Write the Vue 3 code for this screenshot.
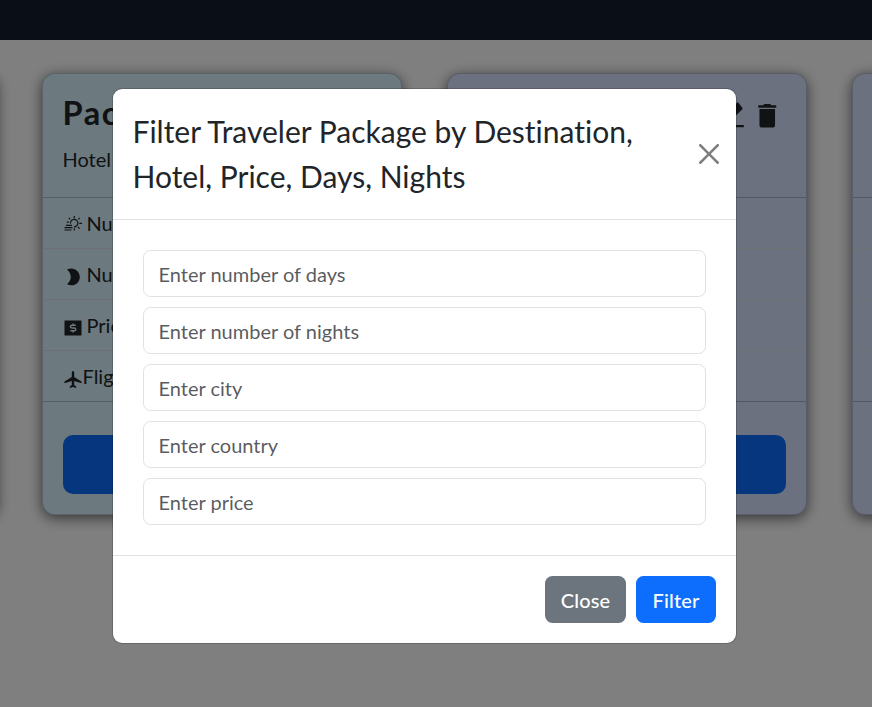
<script setup>
const cards = [
  { id: 1, tone: 'sky', title: 'Package' },
  { id: 2, tone: 'sky', title: 'Package' },
  { id: 3, tone: 'lavender', title: 'Package' },
  { id: 4, tone: 'lavender', title: 'Package' },
]
const fields = [
  'Enter number of days',
  'Enter number of nights',
  'Enter city',
  'Enter country',
  'Enter price',
]
</script>

<template>
  <div class="page">
    <header class="navbar"></header>
    <main class="track">
      <article v-for="card in cards" :key="card.id" class="card" :class="card.tone">
        <div class="card-head">
          <div class="card-top">
            <h2>{{ card.title }}</h2>
            <div class="actions">
              <svg class="edit" viewBox="0 -4 24 28"><path d="M1 15.500V19h3.500L15.500 8 12 4.500zM12 4L17-1.300q.7-.7 1.400 0L22.300 3.800q.6.7 0 1.400L16.500 11z" /><path d="M0 21h23.800v2.200H0z" /></svg>
              <svg class="trash" viewBox="0 0 18 24"><path d="M0 1.200h5L6 0h6l1 1.200h5v2.500H0zM1.200 5h15.600v16q0 2.600-2.600 2.600H3.800q-2.600 0-2.600-2.600z" /></svg>
            </div>
          </div>
          <p>Hotel</p>
        </div>
        <ul>
          <li>
            <svg class="ico line" viewBox="0 0 18 18">
              <path d="M6.500 8.500A3.700 3.700 0 1 1 10 11.800M10.300 1v2.200M10.300 13.200v2.200M15.300 8.300H18M4.800 2.800l1.500 1.500M15.800 2.800l-1.500 1.500M14 12l1.600 1.600M2.800 7.200h2" />
              <path d="M2 10.300h6M.5 12.700h8M.5 15h7" />
            </svg>
            <span>Number of days</span>
          </li>
          <li>
            <svg class="ico" viewBox="0 0 18 18"><path d="M3 1.600C9.500-1.500 15.800 3 15.800 9S9.500 19.500 3 16.200C8 12 8 6 3 1.600z" /></svg>
            <span>Number of nights</span>
          </li>
          <li>
            <svg class="ico" viewBox="0 0 18 18">
              <path d="M.5 1.500h17v15H.5z" />
              <path d="M11.800 6.200H8q-1.600 0-1.600 1.400T8 9h2.200q1.600 0 1.600 1.400t-1.600 1.400H6.300M9.100 4.500v1.700m0 5.600v1.700" class="dollar" />
            </svg>
            <span>Price</span>
          </li>
          <li>
            <svg class="ico" viewBox="0 0 18 18"><path d="M9 1q1.200 0 1.200 1.600v4.300l7.300 4.500v1.800l-7.300-2.200v4l2 1.500V18L9 17l-3.200 1v-1.500l2-1.500v-4L.5 13.200v-1.800l7.300-4.500V2.600Q7.800 1 9 1z" /></svg>
            <span>Flights</span>
          </li>
        </ul>
        <div class="card-foot"><div class="book"></div></div>
      </article>
    </main>
    <div class="backdrop">
      <section class="modal" role="dialog">
        <div class="modal-header">
          <h1>Filter Traveler Package by Destination, Hotel, Price, Days, Nights</h1>
          <button class="dismiss" type="button" aria-label="Close">
            <svg viewBox="0 0 16 16"><path d="M.293.293a1 1 0 0 1 1.414 0L8 6.586 14.293.293a1 1 0 1 1 1.414 1.414L9.414 8l6.293 6.293a1 1 0 0 1-1.414 1.414L8 9.414l-6.293 6.293a1 1 0 0 1-1.414-1.414L6.586 8 .293 1.707a1 1 0 0 1 0-1.414z" /></svg>
          </button>
        </div>
        <div class="modal-body">
          <input v-for="field in fields" :key="field" type="text" :placeholder="field" />
        </div>
        <div class="modal-footer">
          <button class="btn secondary" type="button">Close</button>
          <button class="btn primary" type="button">Filter</button>
        </div>
      </section>
    </div>
  </div>
</template>

<style>
body {
  margin: 0;
  overflow: hidden;
}
</style>

<style scoped>
* {
  box-sizing: border-box;
}
.page {
  position: relative;
  height: 707px;
  overflow: hidden;
  background: #fff;
  color: #212529;
  font-family: Lato, sans-serif;
  font-size: 20px;
  line-height: 30px;
  font-variant-ligatures: none;
}
.navbar {
  height: 40px;
  background: #141c2c;
}
.track {
  display: flex;
  gap: 45px;
  width: max-content;
  margin: 33px 0 0 -363px;
}
.card {
  width: 360px;
  height: 442px;
  border: 1px solid rgba(0, 0, 0, 0.176);
  border-radius: 13px;
  box-shadow: 0 3px 14px rgba(0, 0, 0, 0.6);
  overflow: hidden;
}
.sky {
  background: #d8f2fe;
}
.lavender {
  background: #d8e3fe;
}
.card-head {
  height: 123px;
  padding: 18px 20px 0 19.5px;
}
.card-top {
  display: flex;
  justify-content: space-between;
}
h2 {
  margin: 0;
  font-size: 32.5px;
  line-height: 42px;
  font-weight: 700;
  letter-spacing: 1.6px;
}
.actions {
  display: flex;
  gap: 14px;
  padding: 12px 9.5px 0 0;
}
svg {
  display: block;
  fill: currentColor;
}
.edit {
  width: 24px;
  height: 28px;
  margin-top: -4px;
}
.trash {
  width: 18.5px;
  height: 24px;
}
.card-head p {
  margin: 10px 0 0;
}
ul {
  margin: 0;
  padding: 0;
  list-style: none;
  border-top: 1px solid rgba(0, 0, 0, 0.22);
  border-bottom: 1px solid rgba(0, 0, 0, 0.22);
}
li {
  display: flex;
  align-items: center;
  gap: 4.5px;
  height: 51px;
  padding: 0 20px 0 21px;
  border-bottom: 1px solid #dcdfe5;
}
li:last-child {
  height: 50px;
  gap: 0.5px;
  border-bottom: 0;
}
.ico {
  width: 18px;
  height: 18px;
  margin-top: 5px;
}
.ico.line {
  margin-top: 2px;
  fill: none;
  stroke: currentColor;
  stroke-width: 1.2;
}
.dollar {
  fill: none;
  stroke: #d8f2fe;
  stroke-width: 1.4;
}
.card-foot {
  padding: 33px 20px 20px;
}
.book {
  height: 59px;
  border-radius: 10px;
  background: #0d6efd;
}
.backdrop {
  position: absolute;
  inset: 0;
  padding: 88px 0 0 112px;
  background: rgba(0, 0, 0, 0.5);
}
.modal {
  width: 625px;
  border: 1px solid rgba(0, 0, 0, 0.176);
  border-radius: 10px;
  background: #fff;
  background-clip: padding-box;
}
.modal-header {
  display: flex;
  align-items: center;
  justify-content: space-between;
  padding: 20px;
  border-bottom: 1px solid #dee2e6;
}
h1 {
  width: 520px;
  margin: 0 0 0 -0.5px;
  font-size: 30px;
  line-height: 45px;
  font-weight: 400;
}
.dismiss {
  display: flex;
  margin: 0 -10px 0 0;
  padding: 7px;
  border: 0;
  background: none;
  color: #000;
  opacity: 0.5;
}
.dismiss svg {
  width: 20px;
  height: 20px;
}
.modal-body {
  display: flex;
  flex-direction: column;
  gap: 10px;
  padding: 30px;
}
input {
  height: 47px;
  padding: 7px 14.5px;
  border: 1px solid #dee2e6;
  border-radius: 7.5px;
  font: 20px/30px Lato, sans-serif;
}
input::placeholder {
  color: rgba(33, 37, 41, 0.75);
}
.modal-footer {
  display: flex;
  justify-content: flex-end;
  gap: 10px;
  padding: 20px;
  border-top: 1px solid #dee2e6;
}
.btn {
  height: 47px;
  padding: 1px 0 0;
  border: 0;
  border-radius: 7.5px;
  color: #fff;
  font: 500 20px/30px Lato, sans-serif;
  letter-spacing: 0.15px;
}
.secondary {
  width: 81px;
  background: #6c757d;
}
.primary {
  width: 80px;
  background: #0d6efd;
}
</style>
